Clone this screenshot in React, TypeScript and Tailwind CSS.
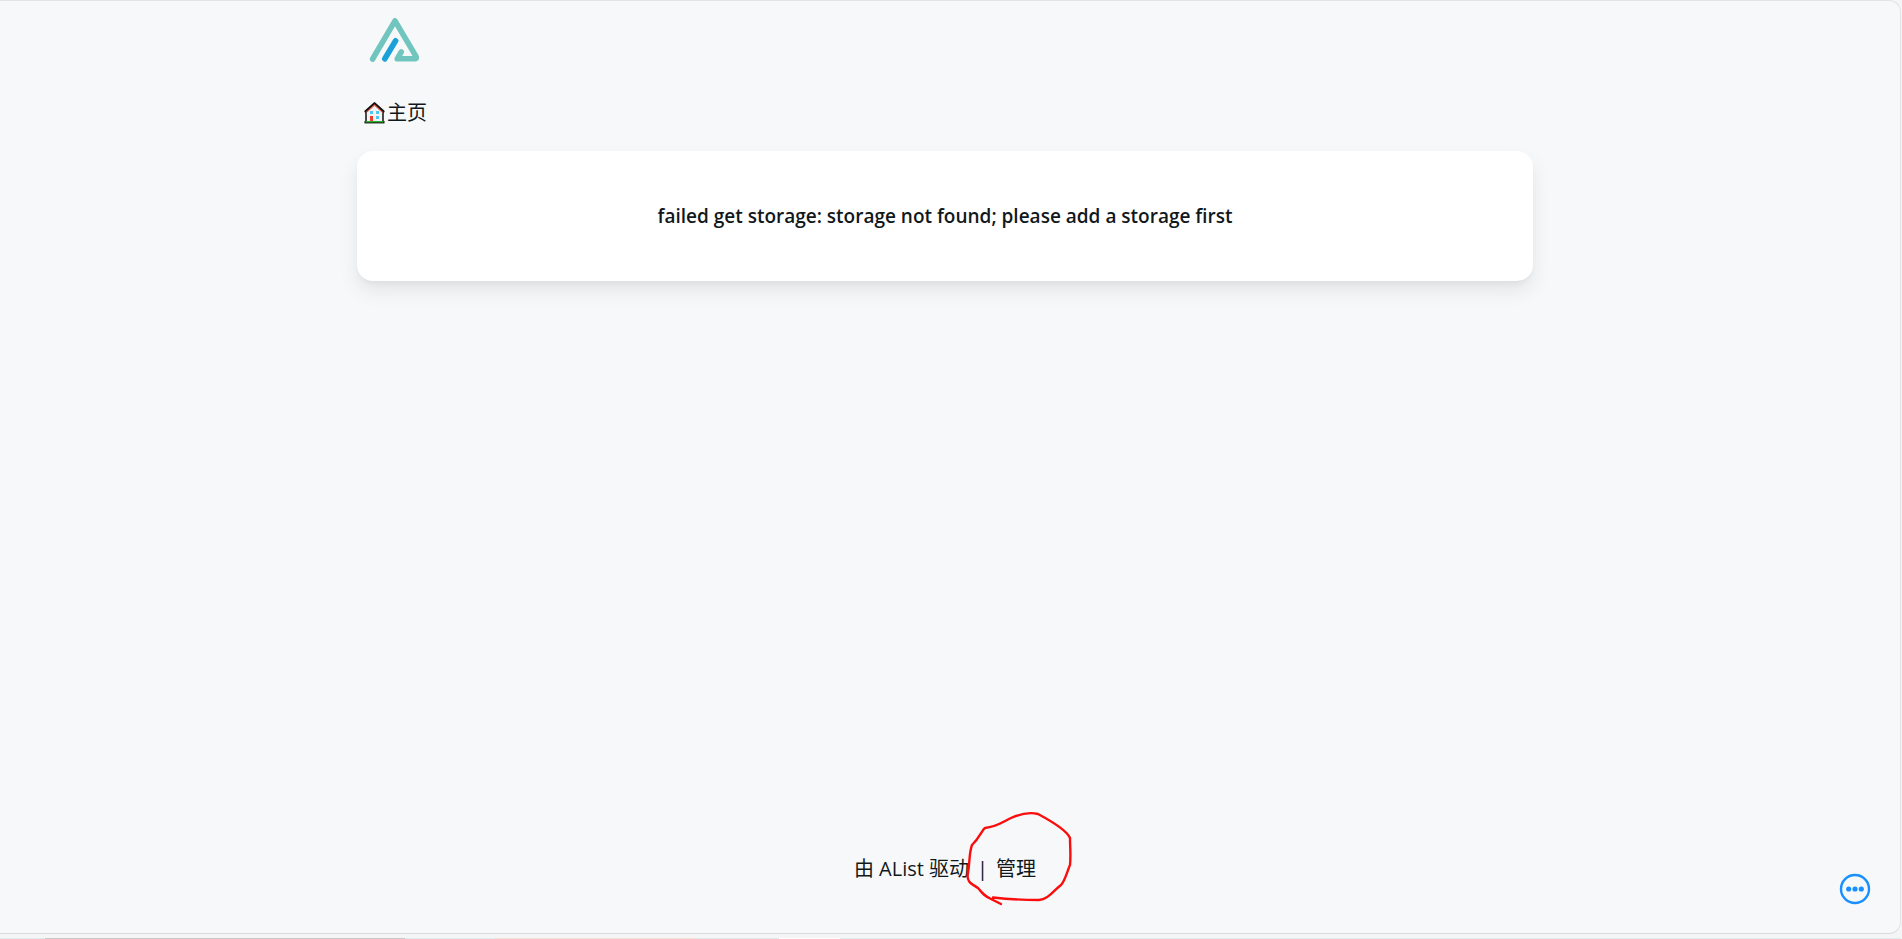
import React from 'react';

const Logo: React.FC = () => (
  <svg className="w-16 h-16" viewBox="0 0 64 64" fill="none" strokeLinecap="round" strokeLinejoin="round" strokeWidth="5.6" aria-hidden="true">
    <path d="M15.6 50 38 11.8 59 47.4Q60 49.8 58 49.8H40.2L44.2 43" stroke="#70c6be" />
    <path d="M27.8 49.8 38.6 31.8" stroke="#1ba0d8" />
  </svg>
);

const HouseIcon: React.FC = () => (
  <svg className="w-6 h-6" viewBox="0 0 24 24" aria-hidden="true">
    <path d="M3 11v10h17V11l-8.5-8z" fill="#f3f3f5" stroke="#111" strokeWidth="1.5" />
    <path d="M2.5 10.4 11.5 2.2l9 8.2" fill="none" stroke="#111" strokeWidth="2.2" strokeLinecap="round" strokeLinejoin="round" />
    <path d="M3.4 11.4 11.5 4l8.1 7.4" fill="none" stroke="#e8604c" strokeWidth="1.2" />
    <path d="M7 10h3v3H7zM13 10h3v3h-3zM13 15h3v3h-3z" fill="#4cc9ee" />
    <path d="M7 15h3v5.5H7z" fill="#e8402c" />
    <path d="M1.5 20h20v2.4h-20z" fill="#111" />
    <path d="M2.5 20h18v1.4h-18z" fill="#2fb12f" />
  </svg>
);

const MoreIcon: React.FC = () => (
  <svg className="w-8 h-8" viewBox="0 0 32 32" aria-hidden="true">
    <circle cx="16" cy="16" r="14" fill="none" stroke="#1890ff" strokeWidth="2.4" />
    <circle cx="9.7" cy="16" r="2.6" fill="#1890ff" />
    <circle cx="16" cy="16" r="2.6" fill="#1890ff" />
    <circle cx="22.3" cy="16" r="2.6" fill="#1890ff" />
  </svg>
);

// hand drawn ring around the manage link
const Scribble: React.FC = () => (
  <svg
    className="absolute -left-8 -top-[42px] w-[110px] h-[96px] pointer-events-none"
    viewBox="0 0 110 96"
    fill="none"
    stroke="#fb0d0d"
    strokeWidth="2.4"
    strokeLinecap="round"
    strokeLinejoin="round"
    aria-hidden="true"
  >
    <path d="M29 86.5C42 88 54 89 75 89C84 88 87 82 97 74C101 70 104 58 106 54C107 44 106 36 106 27C103 20 89 11 74 3C66 1 58 2 47 7C37 12 32 16 21 17C18 19 16 26 8 34C5 42 6 50 4 62C2 71 8 73 14 77C18 82 20 85 27 88L37 93" />
  </svg>
);

const App: React.FC = () => {
  return (
    <div className="h-screen flex flex-col bg-[#f5f5f5] pr-px overflow-hidden text-xl text-[#11181c] font-['Open_Sans','Noto_Sans_CJK_SC',sans-serif]">
      <div className="relative flex-1 flex flex-col bg-[#f7f8fa] rounded-r-xl border-t border-r border-b border-[#e3e3e4] border-b-[#d9dadb] pr-2.5">
        <div className="w-full max-w-[1200px] mx-auto px-3 flex-1 flex flex-col">
          <header className="h-20 pt-2">
            <a href="#" aria-label="AList" className="inline-block">
              <Logo />
            </a>
          </header>

          <nav className="h-[70px] pt-4 px-1.5">
            <a href="#" className="inline-flex items-center leading-8">
              <HouseIcon />
              <span>主页</span>
            </a>
          </nav>

          <main className="bg-white rounded-2xl shadow-[0_10px_20px_rgba(0,0,0,0.08),0_4px_6px_-2px_rgba(0,0,0,0.05)] px-8 py-12">
            <h2 className="font-semibold text-[19px] leading-[34px] text-center">
              failed get storage: storage not found; please add a storage first
            </h2>
          </main>

          <footer className="mt-auto mb-12 flex justify-center items-center gap-2 leading-8">
            <a href="#">由 AList 驱动</a>
            <span>|</span>
            <a href="#" className="relative">
              管理
              <Scribble />
            </a>
          </footer>
        </div>

        <button type="button" aria-label="更多" className="absolute right-[29px] bottom-7 w-8 h-8">
          <MoreIcon />
        </button>
      </div>

      <div className="h-1 shrink-0" />
      <div className="h-px flex shrink-0">
        <div className="w-[45px] bg-[#dcecef]" />
        <div className="w-[360px] bg-[#c8c8c8]" />
        <div className="w-[90px] bg-[#dcecef]" />
        <div className="w-[200px] bg-[#f0e2d8]" />
        <div className="w-[84px] bg-[#dfeae8]" />
        <div className="w-[61px] bg-white" />
        <div className="flex-1 bg-[#dcecef]" />
      </div>
    </div>
  );
};

export default App;
